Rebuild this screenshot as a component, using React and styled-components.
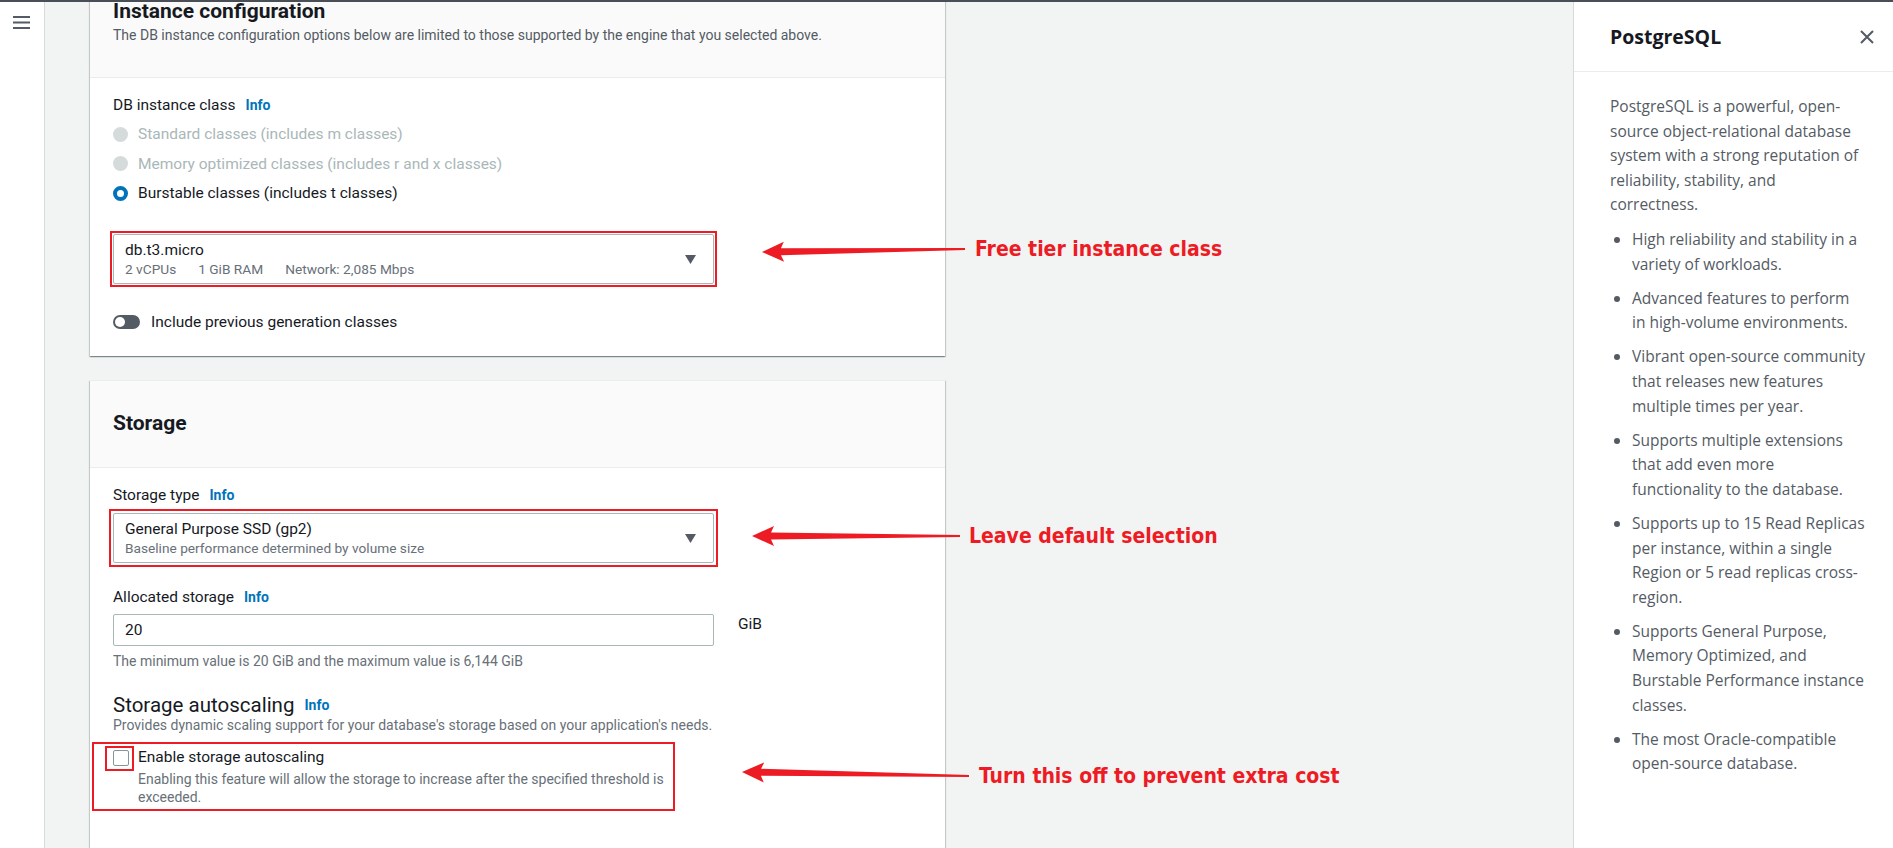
import React from "react";
import styled, { createGlobalStyle } from "styled-components";

const GlobalStyle = createGlobalStyle`
  html, body {
    margin: 0;
    padding: 0;
    height: 100%;
  }
  body {
    background: #f2f3f3;
    overflow: hidden;
    font-family: Roboto, "Liberation Sans", Arial, sans-serif;
    color: #16191f;
  }
  * {
    box-sizing: border-box;
  }
`;

// arrow shape pointing from the tail back to the tip
const arrowPoints = (tx, ty, ex, ey) => {
  const len = Math.hypot(ex - tx, ey - ty);
  const ux = (ex - tx) / len;
  const uy = (ey - ty) / len;
  const nx = -uy;
  const ny = ux;
  const p = (a, b) =>
    `${(tx + ux * a + nx * b).toFixed(1)},${(ty + uy * a + ny * b).toFixed(1)}`;
  return [
    p(0, 0),
    p(22, 10),
    p(19, 3.5),
    p(len, 1),
    p(len, -1),
    p(19, -3.5),
    p(22, -10),
  ].join(" ");
};

const callouts = [
  { tip: [717, 250], tail: [920, 247], x: 930, y: 247, text: "Free tier instance class" },
  { tip: [707, 534], tail: [915, 534], x: 924, y: 534, text: "Leave default selection" },
  { tip: [697, 770], tail: [924, 774], x: 934, y: 774, text: "Turn this off to prevent extra cost" },
];

// help panel copy, split where the panel wraps it
const intro = [
  "PostgreSQL is a powerful, open-",
  "source object-relational database",
  "system with a strong reputation of",
  "reliability, stability, and",
  "correctness.",
];

const bullets = [
  ["High reliability and stability in a", "variety of workloads."],
  ["Advanced features to perform", "in high-volume environments."],
  ["Vibrant open-source community", "that releases new features", "multiple times per year."],
  ["Supports multiple extensions", "that add even more", "functionality to the database."],
  [
    "Supports up to 15 Read Replicas",
    "per instance, within a single",
    "Region or 5 read replicas cross-",
    "region.",
  ],
  [
    "Supports General Purpose,",
    "Memory Optimized, and",
    "Burstable Performance instance",
    "classes.",
  ],
  ["The most Oracle-compatible", "open-source database."],
];

const Caret = () => (
  <CaretIcon width="11" height="10" viewBox="0 0 11 10">
    <path d="M0 1 L11 1 L5.5 10 Z" fill="#545b64" />
  </CaretIcon>
);

export default function App() {
  return (
    <Page>
      <GlobalStyle />
      <TopBar />
      <Layout>
        <SideNav>
          <MenuIcon width="17" height="15" viewBox="0 0 17 15">
            <rect x="0" y="1" width="17" height="2" fill="#545b64" />
            <rect x="0" y="6.5" width="17" height="2" fill="#545b64" />
            <rect x="0" y="12" width="17" height="2" fill="#545b64" />
          </MenuIcon>
        </SideNav>

        <Main>
          <Card $first>
            <CardHeader>
              <CardTitle>Instance configuration</CardTitle>
              <CardDesc>
                The DB instance configuration options below are limited to those
                supported by the engine that you selected above.
              </CardDesc>
            </CardHeader>
            <CardBody>
              <LabelRow>
                <Label>DB instance class</Label>
                <InfoLink>Info</InfoLink>
              </LabelRow>
              <RadioGroup>
                <RadioRow>
                  <RadioDot $disabled />
                  <RadioText $disabled>Standard classes (includes m classes)</RadioText>
                </RadioRow>
                <RadioRow>
                  <RadioDot $disabled />
                  <RadioText $disabled>
                    Memory optimized classes (includes r and x classes)
                  </RadioText>
                </RadioRow>
                <RadioRow>
                  <RadioDot $checked />
                  <RadioText>Burstable classes (includes t classes)</RadioText>
                </RadioRow>
              </RadioGroup>
              <FieldCol>
                <Highlight $inset={3} $top={28}>
                  <SelectBox>
                    <div>
                      <SelectMain>db.t3.micro</SelectMain>
                      <SelectSub>
                        <span>2 vCPUs</span>
                        <span>1 GiB RAM</span>
                        <span>Network: 2,085 Mbps</span>
                      </SelectSub>
                    </div>
                    <Caret />
                  </SelectBox>
                </Highlight>
              </FieldCol>
              <ToggleRow>
                <ToggleTrack>
                  <ToggleKnob />
                </ToggleTrack>
                <Label>Include previous generation classes</Label>
              </ToggleRow>
            </CardBody>
          </Card>

          <Card>
            <CardHeader>
              <CardTitle>Storage</CardTitle>
            </CardHeader>
            <CardBody $tall>
              <LabelRow>
                <Label>Storage type</Label>
                <InfoLink>Info</InfoLink>
              </LabelRow>
              <FieldCol>
                <Highlight $inset={4} $top={4}>
                  <SelectBox>
                    <div>
                      <SelectMain>General Purpose SSD (gp2)</SelectMain>
                      <SelectSub>
                        <span>Baseline performance determined by volume size</span>
                      </SelectSub>
                    </div>
                    <Caret />
                  </SelectBox>
                </Highlight>
              </FieldCol>
              <LabelRow $top={20}>
                <Label>Allocated storage</Label>
                <InfoLink>Info</InfoLink>
              </LabelRow>
              <InputRow>
                <TextInput>20</TextInput>
                <Unit>GiB</Unit>
              </InputRow>
              <Hint $top={7}>
                The minimum value is 20 GiB and the maximum value is 6,144 GiB
              </Hint>
              <SubHeading>
                Storage autoscaling
                <InfoLink>Info</InfoLink>
              </SubHeading>
              <Hint>
                Provides dynamic scaling support for your database's storage based on
                your application's needs.
              </Hint>
              <AutoscaleBox>
                <CheckRow>
                  <CheckFrame>
                    <CheckBox />
                  </CheckFrame>
                  <div>
                    <CheckLabel>Enable storage autoscaling</CheckLabel>
                    <CheckDesc>
                      Enabling this feature will allow the storage to increase after the
                      specified threshold is exceeded.
                    </CheckDesc>
                  </div>
                </CheckRow>
              </AutoscaleBox>
            </CardBody>
          </Card>

          <Overlay>
            {callouts.map((c) => (
              <polygon
                key={c.text}
                points={arrowPoints(c.tip[0], c.tip[1], c.tail[0], c.tail[1])}
                fill="#ed1c24"
              />
            ))}
          </Overlay>
          {callouts.map((c) => (
            <Callout key={c.text} $x={c.x} $y={c.y}>
              {c.text}
            </Callout>
          ))}
        </Main>

        <HelpPanel>
          <PanelHeader>
            <PanelTitle>PostgreSQL</PanelTitle>
            <CloseIcon width="14" height="14" viewBox="0 0 14 14">
              <path d="M1 1 L13 13 M13 1 L1 13" stroke="#545b64" strokeWidth="2" />
            </CloseIcon>
          </PanelHeader>
          <PanelBody>
            <PanelText>
              {intro.map((line) => (
                <Line key={line}>{line}</Line>
              ))}
            </PanelText>
            <BulletList>
              {bullets.map((b) => (
                <Bullet key={b[0]}>
                  {b.map((line) => (
                    <Line key={line}>{line}</Line>
                  ))}
                </Bullet>
              ))}
            </BulletList>
          </PanelBody>
        </HelpPanel>
      </Layout>
    </Page>
  );
}

const Page = styled.div`
  width: 100vw;
  height: 100vh;
  display: flex;
  flex-direction: column;
  overflow: hidden;
`;

const TopBar = styled.div`
  height: 2px;
  flex: none;
  background: #4a4f57;
`;

const Layout = styled.div`
  flex: 1;
  display: flex;
  min-height: 0;
`;

const SideNav = styled.nav`
  width: 45px;
  flex: none;
  background: #fff;
  border-right: 1px solid #d5dbdb;
  padding: 13px 0 0 13px;
`;

const MenuIcon = styled.svg`
  display: block;
`;

const Main = styled.main`
  position: relative;
  flex: 1;
  min-width: 0;
  overflow: hidden;
  padding-left: 45px;
`;

const Card = styled.section`
  width: 855px;
  margin-top: ${(p) => (p.$first ? "-34px" : "24px")};
  background: #fff;
  box-shadow: 0 1px 1px 0 rgba(0, 28, 36, 0.3), 1px 1px 1px 0 rgba(0, 28, 36, 0.15),
    -1px 1px 1px 0 rgba(0, 28, 36, 0.15);
  border-top: 1px solid #eaeded;
`;

const CardHeader = styled.header`
  background: #fafafa;
  border-bottom: 1px solid #eaeded;
  padding: 30px 23px 32px;
`;

const CardTitle = styled.h2`
  margin: 0;
  font-size: 21px;
  line-height: 24px;
  font-weight: 700;
  color: #16191f;
`;

const CardDesc = styled.p`
  margin: 2px 0 0;
  font-size: 14px;
  line-height: 20px;
  color: #545b64;
`;

const CardBody = styled.div`
  padding: 17px 23px ${(p) => (p.$tall ? "200px" : "24px")};
`;

const LabelRow = styled.div`
  display: flex;
  align-items: center;
  height: 20px;
  margin-top: ${(p) => p.$top || 0}px;
`;

const Label = styled.span`
  font-size: 15.5px;
  line-height: 20px;
  color: #16191f;
`;

const InfoLink = styled.span`
  margin-left: 10px;
  font-size: 14px;
  font-weight: 700;
  color: #0073bb;
`;

const RadioGroup = styled.div`
  display: flex;
  flex-direction: column;
  gap: 9.5px;
  margin-top: 9px;
`;

const RadioRow = styled.div`
  display: flex;
  align-items: center;
  height: 20px;
  gap: 10px;
`;

const RadioDot = styled.span`
  width: 15px;
  height: 15px;
  border-radius: 50%;
  flex: none;
  background: ${(p) => (p.$disabled ? "#d5dbdb" : "#fff")};
  border: ${(p) => (p.$checked ? "4.5px solid #0073bb" : "none")};
`;

const RadioText = styled.span`
  font-size: 15.5px;
  line-height: 20px;
  color: ${(p) => (p.$disabled ? "#aab7b8" : "#16191f")};
`;

const FieldCol = styled.div`
  width: 601px;
`;

const Highlight = styled.div`
  margin: ${(p) => p.$top}px -${(p) => p.$inset}px 0;
  border: 2px solid #ed1c24;
  padding: ${(p) => p.$inset - 2}px;
`;

const SelectBox = styled.div`
  display: flex;
  align-items: center;
  justify-content: space-between;
  height: 50px;
  padding: 5px 17px 5px 11px;
  border: 1px solid #aab7b8;
  border-radius: 2px;
  background: #fff;
`;

const SelectMain = styled.div`
  font-size: 15.5px;
  line-height: 20px;
  color: #16191f;
`;

const SelectSub = styled.div`
  display: flex;
  gap: 22px;
  font-size: 13.7px;
  line-height: 18px;
  color: #687078;
`;

const CaretIcon = styled.svg`
  display: block;
  flex: none;
`;

const ToggleRow = styled.div`
  display: flex;
  align-items: center;
  gap: 11px;
  height: 20px;
  margin-top: 25px;
`;

const ToggleTrack = styled.span`
  width: 27px;
  height: 14px;
  border-radius: 7px;
  background: #545b64;
  padding: 2px;
  display: flex;
  align-items: center;
`;

const ToggleKnob = styled.span`
  width: 10px;
  height: 10px;
  border-radius: 50%;
  background: #fff;
`;

const InputRow = styled.div`
  display: flex;
  align-items: flex-start;
  gap: 24px;
  margin-top: 7px;
`;

const TextInput = styled.div`
  width: 601px;
  height: 32px;
  border: 1px solid #aab7b8;
  border-radius: 2px;
  padding: 0 11px;
  font-size: 15.5px;
  line-height: 30px;
  color: #16191f;
`;

const Unit = styled.span`
  font-size: 15.5px;
  line-height: 20px;
  color: #16191f;
`;

const Hint = styled.div`
  margin-top: ${(p) => p.$top || 0}px;
  font-size: 14px;
  line-height: 16px;
  color: #687078;
`;

const SubHeading = styled.h3`
  margin: 24px 0 0;
  display: flex;
  align-items: center;
  font-size: 20.5px;
  line-height: 24px;
  font-weight: 400;
  color: #16191f;
`;

const AutoscaleBox = styled.div`
  width: 583px;
  margin: 9px 0 0 -21px;
  border: 2px solid #ed1c24;
  padding: 2px 4px 3px 11px;
`;

const CheckRow = styled.div`
  display: flex;
  align-items: flex-start;
  gap: 4px;
`;

const CheckFrame = styled.span`
  flex: none;
  border: 2px solid #ed1c24;
  padding: 2px 3px 3px 6px;
`;

const CheckBox = styled.span`
  display: block;
  width: 16px;
  height: 16px;
  border: 1px solid #879596;
  border-radius: 2px;
  background: #fff;
`;

const CheckLabel = styled.div`
  margin-top: 1px;
  font-size: 15.5px;
  line-height: 20px;
  color: #16191f;
`;

const CheckDesc = styled.div`
  margin-top: 3px;
  font-size: 14px;
  line-height: 18px;
  color: #687078;
`;

const Overlay = styled.svg`
  position: absolute;
  inset: 0;
  width: 100%;
  height: 100%;
  pointer-events: none;
`;

const Callout = styled.span`
  position: absolute;
  left: ${(p) => p.$x}px;
  top: ${(p) => p.$y - 14}px;
  font-family: "Liberation Sans Narrow", "DejaVu Sans Condensed", "Liberation Sans",
    sans-serif;
  font-stretch: condensed;
  font-size: 21px;
  line-height: 28px;
  font-weight: 700;
  color: #ed1c24;
  white-space: nowrap;
`;

const HelpPanel = styled.aside`
  width: 320px;
  flex: none;
  background: #fff;
  border-left: 1px solid #d5dbdb;
  font-family: "Open Sans", "Noto Sans", sans-serif;
`;

const PanelHeader = styled.div`
  height: 70px;
  display: flex;
  align-items: center;
  justify-content: space-between;
  padding: 0 19px 0 36px;
  border-bottom: 1px solid #eaeded;
`;

const PanelTitle = styled.h2`
  margin: 0;
  font-size: 19.5px;
  font-weight: 700;
  color: #16191f;
`;

const CloseIcon = styled.svg`
  display: block;
`;

const PanelBody = styled.div`
  padding: 22px 16px 0 36px;
  font-size: 15.5px;
  line-height: 24.6px;
  color: #545b64;
`;

const PanelText = styled.p`
  margin: 0;
`;

const Line = styled.span`
  display: block;
  white-space: nowrap;
`;

const BulletList = styled.ul`
  margin: 10px 0 0;
  padding-left: 22px;
`;

const Bullet = styled.li`
  & + & {
    margin-top: 9.5px;
  }
`;
